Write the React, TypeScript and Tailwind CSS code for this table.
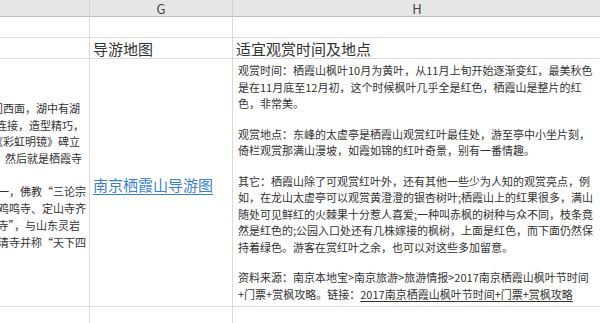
import React from 'react'

const leftLines = [
  { text: '寺门西面，湖中有湖', pr: 'pr-[9px]' },
  { text: '以小桥连接，造型精巧，', pr: 'pr-[5px]' },
  { text: '题有《彩虹明镜》碑立', pr: 'pr-[9px]' },
  { text: '湖边，然后就是栖霞寺', pr: 'pr-[7px]' },
  { text: '', pr: 'pr-0' },
  { text: '宗祖庭之一，佛教“三论宗', pr: 'pr-[3px]' },
  { text: '南京古刹与鸡鸣寺、定山寺齐', pr: 'pr-[3px]' },
  { text: '名“四大名寺”，与山东灵岩', pr: 'pr-[9px]' },
  { text: '天台国清寺并称“天下四', pr: 'pr-[3px]' },
]

const paragraphs = [
  [
    '观赏时间：栖霞山枫叶10月为黄叶，从11月上旬开始逐渐变红，最美秋色',
    '是在11月底至12月初，这个时候枫叶几乎全是红色，栖霞山是整片的红',
    '色，非常美。',
  ],
  [
    '观赏地点：东峰的太虚亭是栖霞山观赏红叶最佳处，游至亭中小坐片刻，',
    '倚栏观赏那满山漫坡，如霞如锦的红叶奇景，别有一番情趣。',
  ],
  [
    '其它：栖霞山除了可观赏红叶外，还有其他一些少为人知的观赏亮点，例',
    '如，在龙山太虚亭可以观赏黄澄澄的银杏树叶;栖霞山上的红果很多，满山',
    '随处可见鲜红的火棘果十分惹人喜爱;一种叫赤枫的树种与众不同，枝条竟',
    '然是红色的;公园入口处还有几株嫁接的枫树，上面是红色，而下面仍然保',
    '持着绿色。游客在赏红叶之余，也可以对这些多加留意。',
  ],
]

export default function App() {
  return (
    <div
      className="w-[600px] h-[323px] overflow-hidden bg-white text-[#333]"
      style={{ fontFamily: '"Noto Sans CJK SC", "Noto Sans", sans-serif' }}
    >
      <div className="grid grid-cols-[90px_143px_367px] grid-rows-[17px_21px_21px_248px_17px]">
        {/* column headers */}
        <div className="bg-[#e6e6e6] border-b border-r border-b-[#bdbdbd] border-r-[#d2d2d2]" />
        <div className="bg-[#e6e6e6] border-b border-r border-b-[#bdbdbd] border-r-[#d2d2d2] flex items-center justify-center text-[13px] leading-none text-[#444]">
          G
        </div>
        <div className="bg-[#e6e6e6] border-b border-b-[#bdbdbd] flex items-center justify-center text-[13px] leading-none text-[#444] pl-px">
          H
        </div>

        {/* row 1 */}
        <div className="border-b border-r border-[#dadada]" />
        <div className="border-b border-r border-[#dadada]" />
        <div className="border-b border-[#dadada]" />

        {/* row 2 */}
        <div className="border-b border-r border-[#dadada]" />
        <div className="border-b border-r border-[#dadada] flex items-center pl-[3px] text-[15px] leading-none whitespace-nowrap">
          导游地图
        </div>
        <div className="border-b border-[#dadada] flex items-center pl-[3px] text-[15px] leading-none whitespace-nowrap">
          适宜观赏时间及地点
        </div>

        {/* row 3 */}
        <div className="border-b border-r border-[#dadada] overflow-hidden pt-[41px] text-[11px] leading-[16.7px]">
          {leftLines.map((l, i) => (
            <div key={i} className={`flex justify-end h-[16.7px] ${l.pr}`}>
              <span className="shrink-0 whitespace-nowrap">{l.text}</span>
            </div>
          ))}
        </div>
        <div className="border-b border-r border-[#dadada] flex items-center pl-[3px] pt-[3px]">
          <span className="text-[15px] leading-none text-[#3b7fd1] underline underline-offset-[3px] whitespace-nowrap">
            南京栖霞山导游图
          </span>
        </div>
        <div className="border-b border-[#dadada] pl-[5px] pt-[3px] text-[11px] leading-[16.5px] whitespace-nowrap flex flex-col gap-[14px]">
          {paragraphs.map((p, i) => (
            <div key={i}>
              {p.map((line, j) => (
                <div key={j}>{line}</div>
              ))}
            </div>
          ))}
          <div>
            <div>资料来源：南京本地宝&gt;南京旅游&gt;旅游情报&gt;2017南京栖霞山枫叶节时间</div>
            <div>
              +门票+赏枫攻略。链接：
              <span className="underline underline-offset-2">2017南京栖霞山枫叶节时间+门票+赏枫攻略</span>
            </div>
          </div>
        </div>

        {/* row 4 */}
        <div className="border-r border-[#dadada]" />
        <div className="border-r border-[#dadada]" />
        <div />
      </div>
    </div>
  )
}
